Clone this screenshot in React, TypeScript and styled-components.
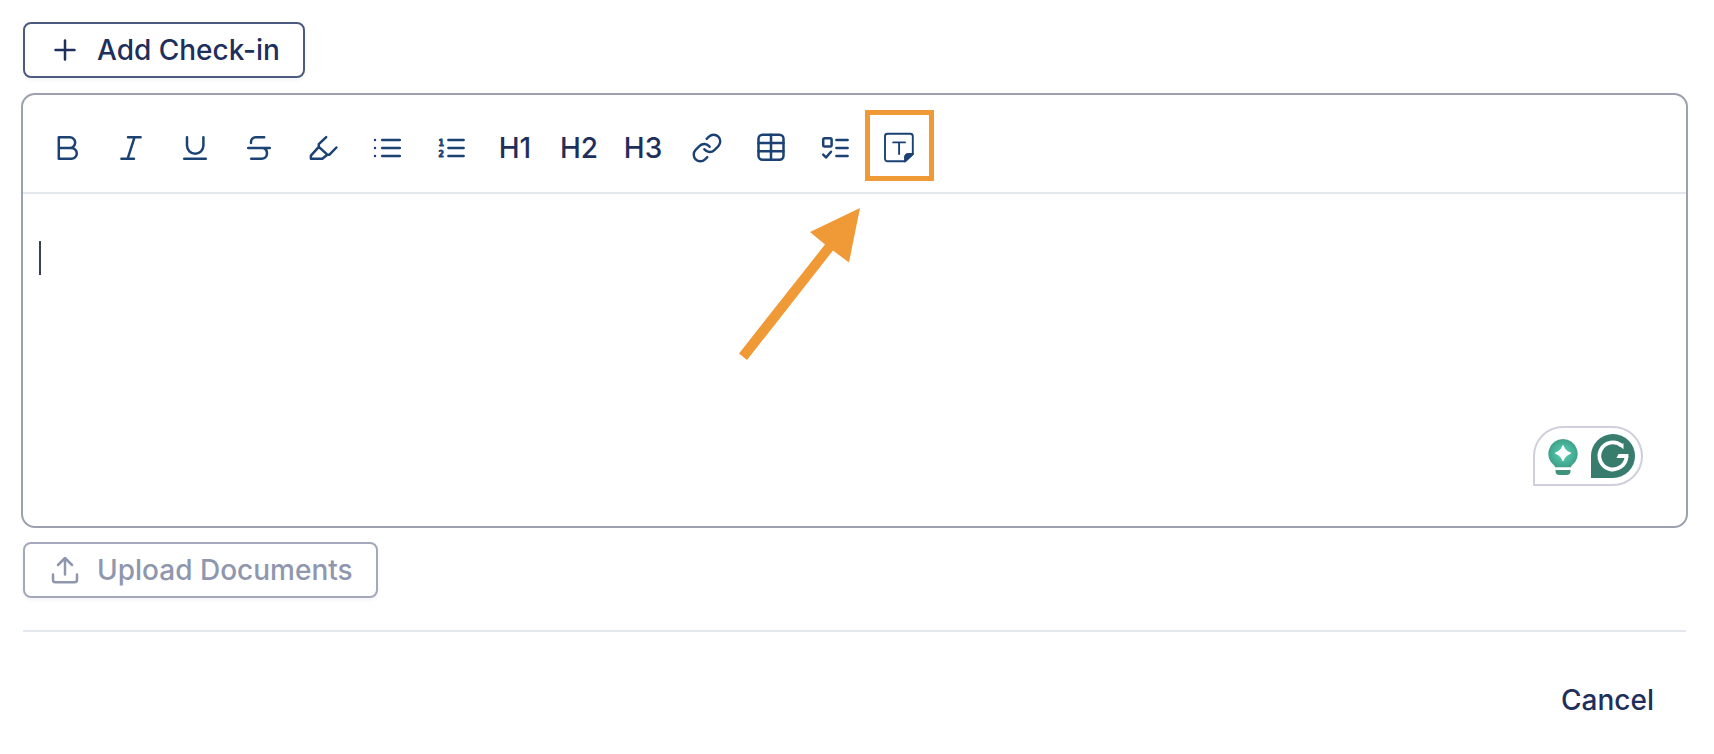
import React from "react";
import styled, { createGlobalStyle, css } from "styled-components";
import { Link as LinkIcon } from "lucide-react";

const GlobalStyle = createGlobalStyle`
  *, *::before, *::after { box-sizing: border-box; }
  body {
    margin: 0;
    background: #ffffff;
    color: #1f2f5c;
    font-family: Inter, "Liberation Sans", sans-serif;
    font-size: 28px;
    font-weight: 500;
    line-height: 36px;
  }
  button, textarea { font: inherit; color: inherit; }
`;

const Page = styled.main`
  display: flex;
  flex-direction: column;
  padding: 22px 26px 24px 21px;
`;

const Row = styled.div<{ $end?: boolean }>`
  display: flex;
  justify-content: ${(p) => (p.$end ? "flex-end" : "flex-start")};
  padding: 0 2px;
`;

const OutlineButton = styled.button<{ $muted?: boolean }>`
  display: flex;
  align-items: center;
  gap: 16px;
  height: 56px;
  padding: 0 23px 0 24px;
  border: 2px solid #4c5a80;
  border-radius: 8px;
  background: #ffffff;
  box-shadow: 0 2px 4px rgba(16, 24, 40, 0.05);
  cursor: pointer;
  ${(p) =>
    p.$muted &&
    css`
      border-color: #a3a8bc;
      color: #8f97ae;
      cursor: default;
    `}
`;

const TextButton = styled.button`
  height: 56px;
  padding: 0 32px;
  border: 0;
  background: transparent;
  cursor: pointer;
`;

const Editor = styled.section`
  position: relative;
  margin: 15px 0 14px;
  border: 2px solid #9ca1b0;
  border-radius: 14px;
`;

const Toolbar = styled.div`
  display: flex;
  padding: 21px 14px 12px 12px;
  border-bottom: 2px solid #e2e8ee;
`;

const ToolButton = styled.button`
  position: relative;
  display: flex;
  align-items: center;
  justify-content: center;
  width: 64px;
  height: 64px;
  padding: 0;
  border: 0;
  background: transparent;
  cursor: pointer;
`;

const Icon = styled.svg`
  flex: none;
  fill: none;
  stroke: currentColor;
  stroke-width: 2.5;
  stroke-linecap: round;
  stroke-linejoin: round;
`;

const ToolIcon = styled(Icon).attrs({ width: 32, height: 32, viewBox: "0 0 32 32", "aria-hidden": true })`
  color: #1b4272;
`;

const ListNumber = styled.text`
  fill: currentColor;
  stroke: currentColor;
  stroke-width: 0.9;
  font: bold 9px "DejaVu Sans Mono", monospace;
`;

const ThinPath = styled.path<{ $filled?: boolean }>`
  fill: ${(p) => (p.$filled ? "currentColor" : "none")};
  stroke-width: 1.9;
`;

const ToolLink = styled(LinkIcon)`
  color: #1b4272;
`;

const HighlightBox = styled.span`
  position: absolute;
  top: -6px;
  left: -2px;
  width: 69px;
  height: 71px;
  border: 5px solid #f09937;
`;

const Arrow = styled.svg`
  position: absolute;
  top: 92px;
  left: -128px;
  fill: #f09937;
  pointer-events: none;
`;

const Body = styled.div`
  display: flex;
  height: 332px;
  padding: 47px 16px 16px;
`;

const Caret = styled.span`
  flex: none;
  width: 2px;
  height: 34px;
  background: #3a4152;
`;

const TextArea = styled.textarea`
  flex: 1;
  padding: 0;
  border: 0;
  outline: 0;
  resize: none;
  background: transparent;
  font-weight: 400;
`;

const Assistant = styled.div`
  position: absolute;
  right: 43px;
  bottom: 40px;
  display: flex;
  align-items: center;
  gap: 13px;
  height: 60px;
  padding: 0 6px 0 13px;
  border: 2px solid #cfcfde;
  border-radius: 30px 30px 30px 0;
  background: #ffffff;
`;

const AssistantButton = styled.button`
  display: flex;
  padding: 0;
  border: 0;
  background: transparent;
  cursor: pointer;
`;

const Divider = styled.hr`
  width: calc(100% - 4px);
  height: 2px;
  margin: 32px 2px 40px;
  border: 0;
  background: #e2e8ee;
`;

const tools: { label: string; content: React.ReactNode }[] = [
  {
    label: "Bold",
    content: (
      <ToolIcon>
        <path d="M7.8 5.2h11a5.4 5.4 0 0 1 0 10.8h-11zM7.8 16h12.6a5.4 5.4 0 0 1 0 10.8H7.8z" />
      </ToolIcon>
    ),
  },
  {
    label: "Italic",
    content: (
      <ToolIcon>
        <path d="M13 5.2h12.6M6.4 26.8H19M19.6 5.2l-7 21.6" />
      </ToolIcon>
    ),
  },
  {
    label: "Underline",
    content: (
      <ToolIcon>
        <path d="M8 5.2v8.3a8.2 8.2 0 0 0 16.4 0V5.2M5.2 26.8h21.6" />
      </ToolIcon>
    ),
  },
  {
    label: "Strikethrough",
    content: (
      <ToolIcon>
        <path d="M21.2 5.2h-8.6A4.6 4.6 0 0 0 8 9.8V11M5.2 16h21.6M20.2 16c2.4.8 3.8 2.8 3.8 5.2 0 3.6-2.4 5.6-5.6 5.6H8.2" />
      </ToolIcon>
    ),
  },
  {
    label: "Highlight",
    content: (
      <ToolIcon>
        <path d="M19.2 5.2l-7.4 7v2.6l-7.9 8.8v3.2h11.4l5-4.1-8.5-7.9M20.3 22.7h2.2l6.9-7.2" />
      </ToolIcon>
    ),
  },
  {
    label: "Bulleted list",
    content: (
      <ToolIcon>
        <path d="M11.2 8h17.6M11.2 16h17.6M11.2 24h17.6" />
        <path d="M4 8h.01M4 16h.01M4 24h.01" />
      </ToolIcon>
    ),
  },
  {
    label: "Numbered list",
    content: (
      <ToolIcon>
        <path d="M13.4 8h15.2M13.4 16h15.2M13.4 24h15.2" />
        <ListNumber x="3.5" y="13.8">1</ListNumber>
        <ListNumber x="3.5" y="25">2</ListNumber>
      </ToolIcon>
    ),
  },
  { label: "Heading 1", content: "H1" },
  { label: "Heading 2", content: "H2" },
  { label: "Heading 3", content: "H3" },
  { label: "Link", content: <ToolLink size={32} strokeWidth={1.8} aria-hidden /> },
  {
    label: "Table",
    content: (
      <ToolIcon>
        <rect x="3.5" y="2.7" width="25" height="25" rx="4" />
        <path d="M16 2.7v25M3.500 11h25M3.500 19.200h25" />
      </ToolIcon>
    ),
  },
  {
    label: "Checklist",
    content: (
      <ToolIcon>
        <rect x="4.2" y="6.2" width="8.4" height="8.4" rx="1.5" />
        <path d="M17.4 8h11.2M17.4 16h11.2M17.4 24h11.2M4.2 22.6L7 25.5l5-5.7" />
      </ToolIcon>
    ),
  },
  {
    label: "Text template",
    content: (
      <>
        <ToolIcon>
          <ThinPath d="M22 29.3H4.5A2.5 2.5 0 0 1 2 26.8V4.3a2.5 2.5 0 0 1 2.5-2.500h22.8a2.5 2.5 0 0 1 2.5 2.5V22z" />
          <ThinPath $filled d="M22 29.3v-4.100a3.2 3.2 0 0 1 3.2-3.200h4.600z" />
          <ThinPath d="M10.2 10.4H22M16.1 10.4V22" />
        </ToolIcon>
        <HighlightBox />
        <Arrow width="122" height="153" viewBox="0 0 122 153" aria-hidden>
          <path d="M121 0 110 54.5 94 42.5 8 152 0 145.5 86 36.5 71 24z" />
        </Arrow>
      </>
    ),
  },
];

const PlusIcon = () => (
  <Icon width="32" height="32" viewBox="0 0 32 32" aria-hidden>
    <path d="M16 6.5v19M6.5 16h19" />
  </Icon>
);

const UploadIcon = () => (
  <Icon width="32" height="32" viewBox="0 0 32 32" aria-hidden>
    <path d="M16 20.5v-16M9 11l7-7 7 7M4 20.5v5.3a2.5 2.5 0 0 0 2.5 2.5h19a2.5 2.5 0 0 0 2.5-2.500v-5.300" />
  </Icon>
);

const BulbIcon = () => (
  <svg width="30" height="38" viewBox="0 0 30 38" aria-hidden>
    <defs>
      <radialGradient id="bulb" cx="0.5" cy="0.5" r="0.55">
        <stop offset="0.3" stopColor="#4fc3a8" />
        <stop offset="1" stopColor="#3f9c86" />
      </radialGradient>
    </defs>
    <path d="M15 2A14.8 14.8 0 0 0 6.200 28.600c.6.5.8 1 .8 1.7h16c0-.7.2-1.200.8-1.700A14.800 14.800 0 0 0 15 2z" fill="url(#bulb)" />
    <path d="M7.5 33h15v1a4 4 0 0 1-4 4h-7a4 4 0 0 1-4-4z" fill="#3f927e" />
    <path d="M15 8.500c2 4.400 3.400 5.800 7.800 7.700-4.400 1.900-5.800 3.300-7.800 7.700-2-4.400-3.400-5.800-7.800-7.700 4.400-1.900 5.800-3.300 7.800-7.700z" fill="#fff" stroke="#fff" strokeLinejoin="round" />
  </svg>
);

const BadgeIcon = () => (
  <svg width="44" height="44" viewBox="0 0 44 44" aria-hidden>
    <path d="M22 0a22 22 0 0 1 0 44H0V22A22 22 0 0 1 22 0z" fill="#387c6e" />
    <path d="M30.8 11.8A13.5 13.5 0 1 0 35.4 22" fill="none" stroke="#fff" strokeWidth="3.8" />
    <path d="M27.5 20h9.900v4H25.500z" fill="#fff" />
    <path d="M32.5 9v6.200l-3.600-3z" fill="#fff" />
  </svg>
);

export default function App() {
  return (
    <>
      <GlobalStyle />
      <Page>
        <Row>
          <OutlineButton type="button">
            <PlusIcon />
            Add Check-in
          </OutlineButton>
        </Row>
        <Editor>
          <Toolbar role="toolbar" aria-label="Formatting">
            {tools.map((tool) => (
              <ToolButton key={tool.label} type="button" aria-label={tool.label}>
                {tool.content}
              </ToolButton>
            ))}
          </Toolbar>
          <Body>
            <Caret />
            <TextArea aria-label="Check-in notes" />
          </Body>
          <Assistant>
            <AssistantButton type="button" aria-label="Suggestions">
              <BulbIcon />
            </AssistantButton>
            <AssistantButton type="button" aria-label="Writing assistant">
              <BadgeIcon />
            </AssistantButton>
          </Assistant>
        </Editor>
        <Row>
          <OutlineButton type="button" $muted>
            <UploadIcon />
            Upload Documents
          </OutlineButton>
        </Row>
        <Divider />
        <Row $end>
          <TextButton type="button">Cancel</TextButton>
        </Row>
      </Page>
    </>
  );
}
